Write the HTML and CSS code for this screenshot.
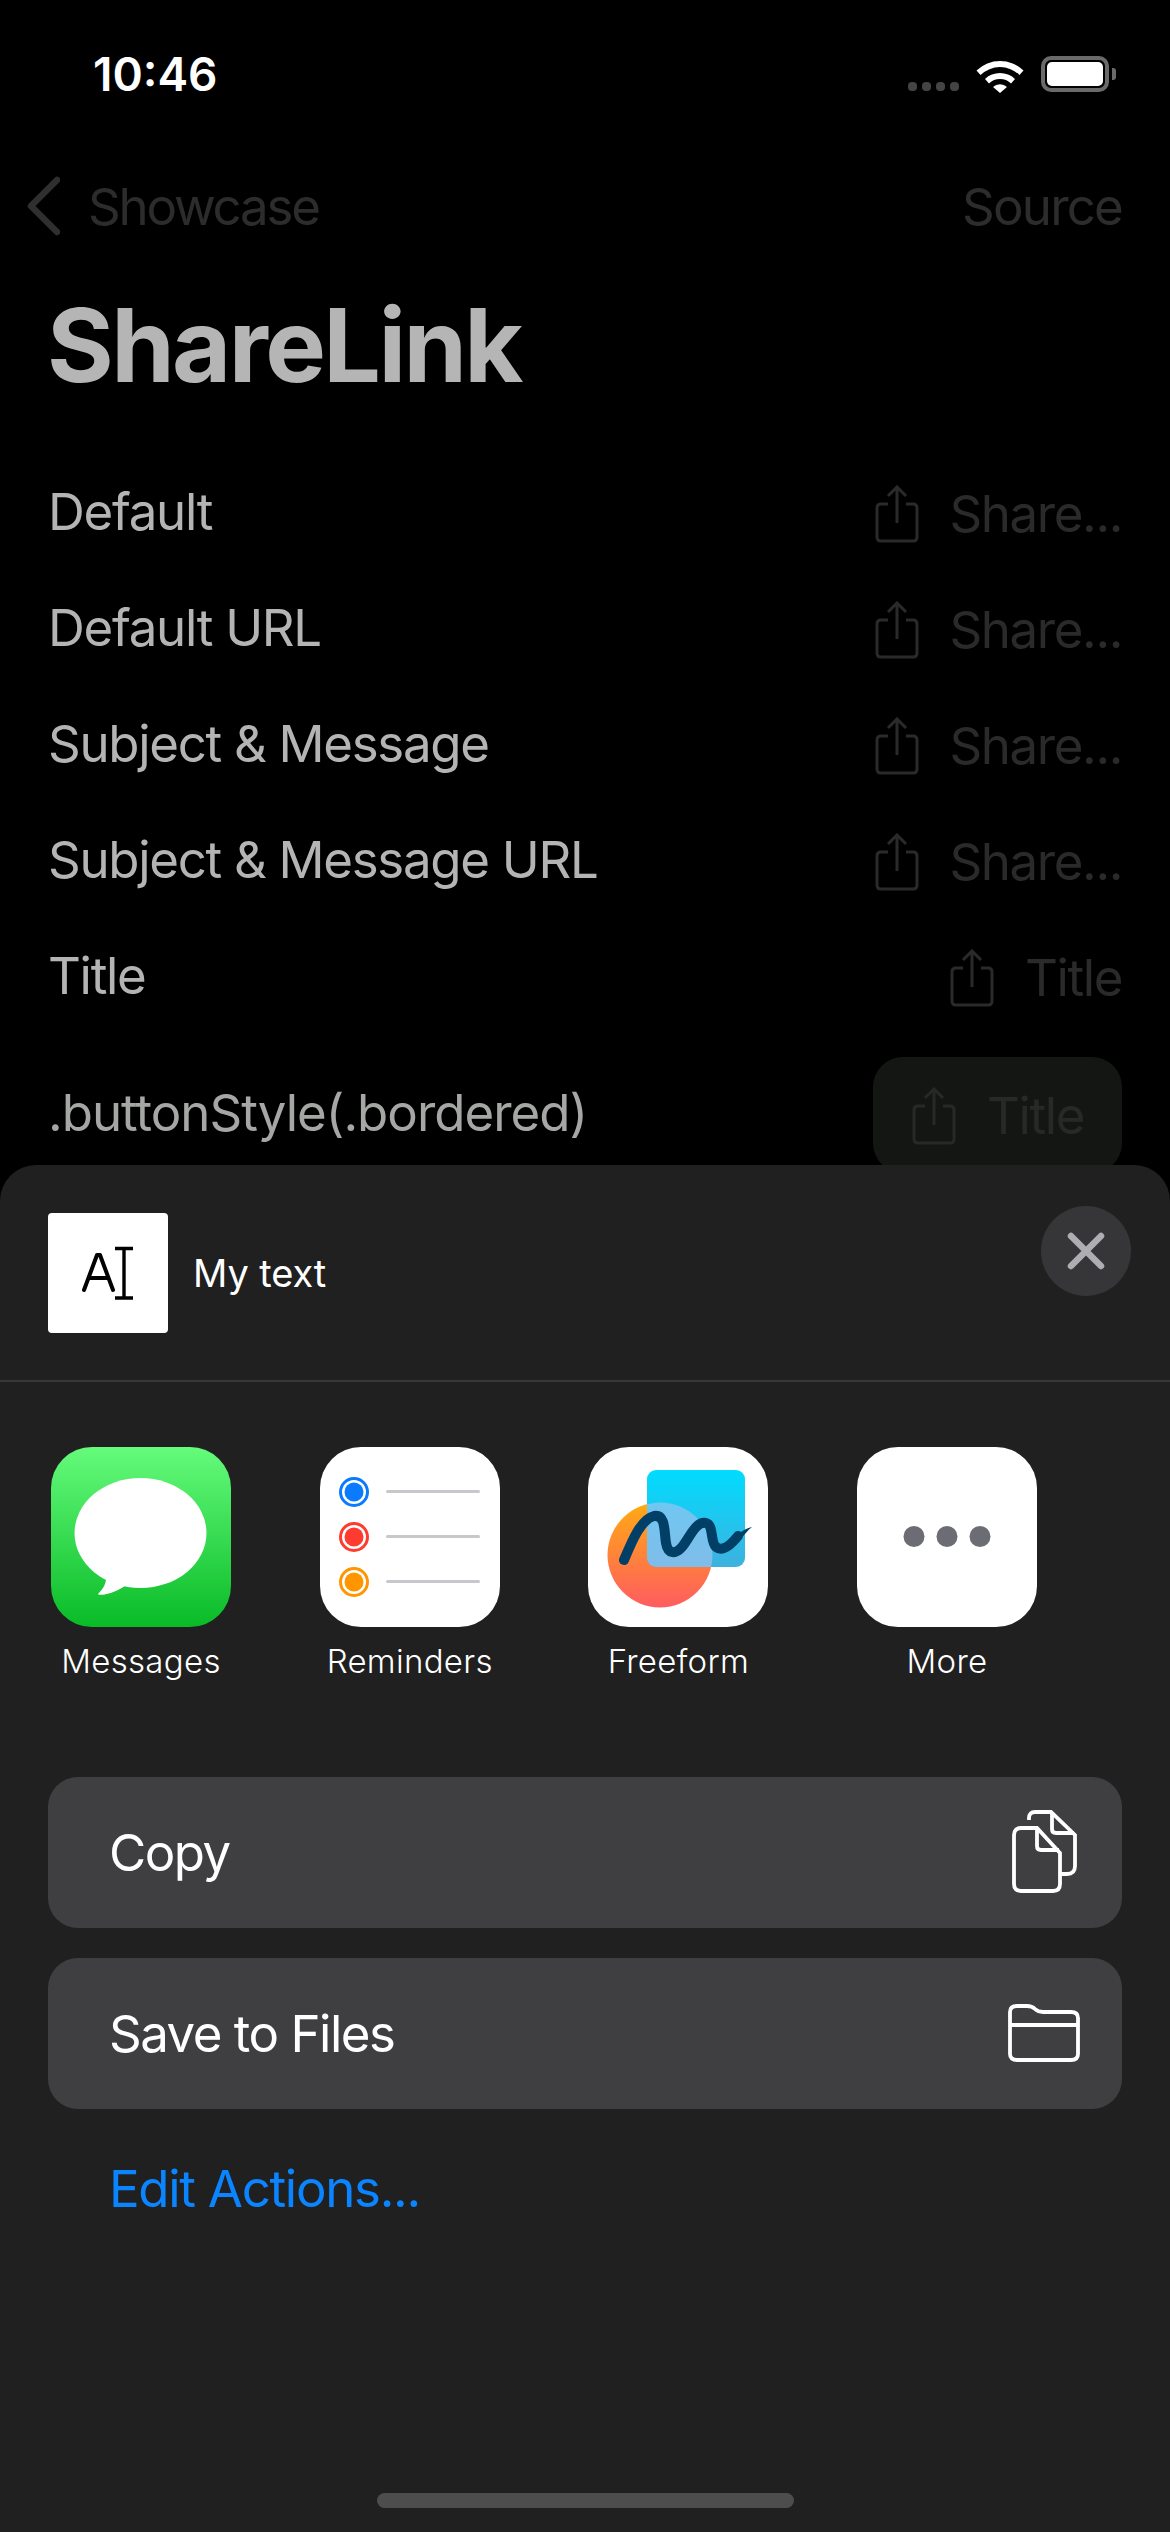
FILE: index.html
```html
<!DOCTYPE html>
<html>
<head>
    <title>ShareLink</title>
    <link rel="stylesheet" href="styles.css">
</head>
<body>
<div class="screen">
    <div class="status-bar">
        <span class="time">10:46</span>
        <div class="status-icons">
            <div class="signal"><i></i><i></i><i></i><i></i></div>
            <svg class="wifi" viewBox="0 0 48 37"><path d="M0.5 14.5 A34 34 0 0 1 47.5 14.5 L43.5 19 A28 28 0 0 0 4.5 19 Z M9 23 A22 22 0 0 1 39 23 L35 27.5 A16 16 0 0 0 13 27.5 Z M17 31 A10 10 0 0 1 31 31 L24 37 Z" fill="#fff"/></svg>
            <div class="battery"><div class="battery-fill"></div></div>
            <div class="battery-nub"></div>
        </div>
    </div>

    <div class="nav">
        <div class="nav-back">
            <svg class="chevron" viewBox="0 0 34 60"><path d="M31 4 L5 30 L31 56" fill="none" stroke="#2f2f2f" stroke-width="6.5" stroke-linecap="round" stroke-linejoin="round"/></svg>
            <span>Showcase</span>
        </div>
        <span>Source</span>
    </div>

    <h1 class="title">ShareLink</h1>

    <div class="list">
        <div class="row">
            <span>Default</span>
            <div class="share"><svg class="share-icon" viewBox="0 0 44 58"><path d="M13 19 H6 Q2 19 2 23 V52 Q2 56 6 56 H38 Q42 56 42 52 V23 Q42 19 38 19 H31 M22 38 V3 M13 11 L22 2 L31 11" fill="none" stroke="currentColor" stroke-width="3"/></svg><span>Share...</span></div>
        </div>
        <div class="row">
            <span>Default URL</span>
            <div class="share"><svg class="share-icon" viewBox="0 0 44 58"><path d="M13 19 H6 Q2 19 2 23 V52 Q2 56 6 56 H38 Q42 56 42 52 V23 Q42 19 38 19 H31 M22 38 V3 M13 11 L22 2 L31 11" fill="none" stroke="currentColor" stroke-width="3"/></svg><span>Share...</span></div>
        </div>
        <div class="row">
            <span>Subject &amp; Message</span>
            <div class="share"><svg class="share-icon" viewBox="0 0 44 58"><path d="M13 19 H6 Q2 19 2 23 V52 Q2 56 6 56 H38 Q42 56 42 52 V23 Q42 19 38 19 H31 M22 38 V3 M13 11 L22 2 L31 11" fill="none" stroke="currentColor" stroke-width="3"/></svg><span>Share...</span></div>
        </div>
        <div class="row">
            <span>Subject &amp; Message URL</span>
            <div class="share"><svg class="share-icon" viewBox="0 0 44 58"><path d="M13 19 H6 Q2 19 2 23 V52 Q2 56 6 56 H38 Q42 56 42 52 V23 Q42 19 38 19 H31 M22 38 V3 M13 11 L22 2 L31 11" fill="none" stroke="currentColor" stroke-width="3"/></svg><span>Share...</span></div>
        </div>
        <div class="row">
            <span>Title</span>
            <div class="share"><svg class="share-icon" viewBox="0 0 44 58"><path d="M13 19 H6 Q2 19 2 23 V52 Q2 56 6 56 H38 Q42 56 42 52 V23 Q42 19 38 19 H31 M22 38 V3 M13 11 L22 2 L31 11" fill="none" stroke="currentColor" stroke-width="3"/></svg><span>Title</span></div>
        </div>
        <div class="row row-bordered">
            <span>.buttonStyle(.bordered)</span>
            <div class="share share-bordered"><svg class="share-icon" viewBox="0 0 44 58"><path d="M13 19 H6 Q2 19 2 23 V52 Q2 56 6 56 H38 Q42 56 42 52 V23 Q42 19 38 19 H31 M22 38 V3 M13 11 L22 2 L31 11" fill="none" stroke="currentColor" stroke-width="3"/></svg><span>Title</span></div>
        </div>
    </div>

    <div class="sheet">
        <div class="sheet-header">
            <div class="preview">
                <div class="thumb">
                    <svg viewBox="0 0 120 120" width="120" height="120">
                        <path d="M36 77 L49 42 H52 L65 77 M41 65 H60" fill="none" stroke="#000" stroke-width="4" stroke-linecap="round" stroke-linejoin="round"/>
                        <path d="M67 35.5 H85 M67 85 H85 M76 35.5 V85" fill="none" stroke="#000" stroke-width="3.4"/>
                    </svg>
                </div>
                <span class="preview-text">My text</span>
            </div>
            <div class="close">
                <svg viewBox="0 0 38 38" width="38" height="38"><path d="M4 4 L34 34 M34 4 L4 34" stroke="#aeaeb2" stroke-width="6.5" stroke-linecap="round"/></svg>
            </div>
        </div>

        <div class="apps">
            <div class="app">
                <svg class="app-icon" viewBox="0 0 180 180">
                    <defs><linearGradient id="msg" x1="0" y1="0" x2="0" y2="1"><stop offset="0" stop-color="#65fb7b"/><stop offset="1" stop-color="#09bb27"/></linearGradient></defs>
                    <rect width="180" height="180" rx="41" fill="url(#msg)"/>
                    <ellipse cx="89.5" cy="86" rx="66" ry="55" fill="#fff"/>
                    <path d="M55 128 C56 136 52 142 47 147 C47 149 60 148 74 139 Z" fill="#fff"/>
                </svg>
                <span>Messages</span>
            </div>
            <div class="app">
                <svg class="app-icon" viewBox="0 0 180 180">
                    <rect width="180" height="180" rx="41" fill="#fff"/>
                    <circle cx="34" cy="45" r="13.5" fill="#fff" stroke="#0a7aff" stroke-width="3"/>
                    <circle cx="34" cy="45" r="9.5" fill="#0a7aff"/>
                    <circle cx="34" cy="90" r="13.5" fill="#fff" stroke="#ff3b30" stroke-width="3"/>
                    <circle cx="34" cy="90" r="9.5" fill="#ff3b30"/>
                    <circle cx="34" cy="135" r="13.5" fill="#fff" stroke="#ff9500" stroke-width="3"/>
                    <circle cx="34" cy="135" r="9.5" fill="#ff9500"/>
                    <path d="M67.5 44.5 H158.5 M67.5 89.5 H158.5 M67.5 134.5 H158.5" stroke="#c7c7cc" stroke-width="3" stroke-linecap="round"/>
                </svg>
                <span>Reminders</span>
            </div>
            <div class="app">
                <svg class="app-icon" viewBox="0 0 180 180">
                    <defs>
                        <linearGradient id="sun" x1="0" y1="0" x2="0" y2="1"><stop offset="0" stop-color="#ffab12"/><stop offset="1" stop-color="#ff5c60"/></linearGradient>
                        <linearGradient id="note" x1="0" y1="0" x2="0" y2="1"><stop offset="0" stop-color="#00dcff"/><stop offset="1" stop-color="#3eb1de"/></linearGradient>
                        <clipPath id="note-clip"><rect x="59" y="23" width="98" height="97" rx="9"/></clipPath>
                    </defs>
                    <rect width="180" height="180" rx="41" fill="#fff"/>
                    <circle cx="72" cy="108" r="52.5" fill="url(#sun)"/>
                    <rect x="59" y="23" width="98" height="97" rx="9" fill="url(#note)"/>
                    <circle cx="72" cy="108" r="52.5" fill="#a8c4f0" opacity="0.62" clip-path="url(#note-clip)"/>
                    <path d="M36 113 C44 94 53 72 66 69 C78 67 76 85 78 96 C80 108 88 107 94 100 C102 90 108 74 118 76 C126 78 122 95 128 100 C136 106 146 94 150 89" fill="none" stroke="#023f66" stroke-width="10" stroke-linecap="round"/>
                    <path d="M146 92 C152 84 159 81 164 80 C160 83 156 88 151 94 Z" fill="#023f66"/>
                </svg>
                <span>Freeform</span>
            </div>
            <div class="app">
                <svg class="app-icon" viewBox="0 0 180 180">
                    <rect width="180" height="180" rx="41" fill="#fff"/>
                    <circle cx="57" cy="89.5" r="10.5" fill="#6c6c74"/>
                    <circle cx="90" cy="89.5" r="10.5" fill="#6c6c74"/>
                    <circle cx="123" cy="89.5" r="10.5" fill="#6c6c74"/>
                </svg>
                <span>More</span>
            </div>
        </div>

        <div class="actions">
            <div class="action">
                <span>Copy</span>
                <svg class="action-icon" viewBox="0 0 72 90">
                    <path d="M21 12 V10 Q21 4 27 4 H43 L67 27 V58 Q67 66 59 66 H53" fill="none" stroke="#fff" stroke-width="3.8"/>
                    <path d="M44 5 V21 Q44 25 48 25 H66" fill="none" stroke="#fff" stroke-width="3.8"/>
                    <path d="M13 20 H29 L52 45 V76 Q52 83 45 83 H13 Q6 83 6 76 V27 Q6 20 13 20 Z" fill="#3f3f41" stroke="#fff" stroke-width="3.8"/>
                    <path d="M29 21 V38 Q29 42 33 42 H51" fill="none" stroke="#fff" stroke-width="3.8"/>
                </svg>
            </div>
            <div class="action">
                <span>Save to Files</span>
                <svg class="action-icon" viewBox="0 0 72 90">
                    <path d="M9 17 H19 Q24 17 27 20 Q30 23 35 23 H63 Q70 23 70 29 V65 Q70 71 63 71 H9 Q2 71 2 65 V23 Q2 17 9 17 Z M2 36 H70" fill="none" stroke="#fff" stroke-width="3.8"/>
                </svg>
            </div>
        </div>

        <a class="edit-actions">Edit Actions...</a>

        <div class="home-bar"></div>
    </div>
</div>
</body>
</html>
```

FILE: styles.css
```css
/* Share sheet over a dimmed SwiftUI list. */
body, html {
    margin: 0;
    padding: 0;
    background: #000;
    font-family: Inter, "Liberation Sans", sans-serif;
}
.screen {
    position: relative;
    width: 1170px;
    height: 2532px;
    overflow: hidden;
}

/* Status bar */
.status-bar {
    display: flex;
    justify-content: space-between;
    align-items: center;
    height: 56px;
    padding: 46px 54px 0 93px;
}
.time {
    color: #fff;
    font-size: 46px;
    font-weight: 600;
}
.status-icons {
    display: flex;
    align-items: center;
}
.signal {
    display: flex;
    gap: 5px;
    margin: 25px 17px 0 0;
}
.signal i {
    width: 9px;
    height: 9px;
    border-radius: 4px;
    background: #444;
}
.wifi {
    width: 48px;
    height: 37px;
    margin-right: 17px;
}
.battery {
    width: 68px;
    height: 36px;
    box-sizing: border-box;
    border: 4px solid #6a6a6a;
    border-radius: 10px;
    padding: 2px;
}
.battery-fill {
    height: 100%;
    background: #fff;
    border-radius: 5px;
}
.battery-nub {
    width: 4px;
    height: 12px;
    margin-left: 3px;
    background: #6a6a6a;
    border-radius: 0 3px 3px 0;
}

/* Nav bar */
.nav {
    display: flex;
    justify-content: space-between;
    align-items: center;
    height: 64px;
    margin-top: 72px;
    padding: 0 48px 0 26px;
    color: #2c2c2c;
    font-size: 51px;
    letter-spacing: -1.8px;
}
.nav-back {
    display: flex;
    align-items: center;
    gap: 28px;
    letter-spacing: -2.2px;
}
.chevron {
    width: 34px;
    height: 60px;
}

.title {
    margin: 45px 0 0;
    padding-left: 47px;
    color: #b5b5b5;
    font-size: 102px;
    font-weight: 700;
    line-height: 124px;
    letter-spacing: -2.6px;
}

/* List rows */
.list {
    margin-top: 46px;
}
.row {
    display: flex;
    justify-content: space-between;
    align-items: center;
    height: 116px;
    padding: 0 48px;
    color: #b4b4b4;
    font-size: 51px;
    letter-spacing: -1.3px;
}
.share {
    display: flex;
    align-items: center;
    gap: 31px;
    padding-top: 4px;
    color: #2a2a2a;
    letter-spacing: -1.4px;
}
.share-icon {
    width: 44px;
    height: 58px;
    margin-top: 2px;
}
.row-bordered {
    color: #a5a7a5;
    margin-top: 21px;
    letter-spacing: -1px;
}
.share-bordered {
    box-sizing: border-box;
    height: 116px;
    margin-top: 6px;
    padding: 0 38px 0 39px;
    border-radius: 30px;
    background: #141614;
    color: #272927;
}

/* Share sheet */
.sheet {
    position: absolute;
    top: 1165px;
    left: 0;
    right: 0;
    bottom: 0;
    display: flex;
    flex-direction: column;
    background: #202020;
    border-radius: 36px 36px 0 0;
}
.sheet-header {
    display: flex;
    justify-content: space-between;
    align-items: flex-start;
    box-sizing: border-box;
    height: 217px;
    padding: 41px 39px 0 48px;
    border-bottom: 2px solid #383838;
}
.preview {
    display: flex;
    align-items: center;
    gap: 25px;
    margin-top: 7px;
}
.thumb {
    width: 120px;
    height: 120px;
    background: #fff;
    border-radius: 4px;
}
.preview-text {
    color: #fff;
    font-size: 38px;
    letter-spacing: -0.1px;
}
.close {
    display: flex;
    align-items: center;
    justify-content: center;
    width: 90px;
    height: 90px;
    border-radius: 50%;
    background: #363639;
}

/* App icons */
.apps {
    display: flex;
    gap: 88.7px;
    padding: 65px 0 0 51px;
}
.app {
    display: flex;
    flex-direction: column;
    align-items: center;
    width: 180px;
    color: #fff;
    font-size: 33px;
    font-weight: 300;
    letter-spacing: 0.3px;
}
.app-icon {
    width: 180px;
    height: 180px;
    margin-bottom: 14px;
}

/* Action rows */
.actions {
    display: flex;
    flex-direction: column;
    gap: 30px;
    margin: 96px 48px 0;
}
.action {
    display: flex;
    justify-content: space-between;
    align-items: center;
    height: 151px;
    padding: 0 42px 0 61px;
    border-radius: 30px;
    background: #3f3f41;
    color: #fff;
    font-size: 51px;
    letter-spacing: -1.5px;
}
.action-icon {
    width: 72px;
    height: 90px;
}
.edit-actions {
    margin: 49px 0 0 109px;
    color: #0a84ff;
    font-size: 51px;
    letter-spacing: -1.3px;
}
.home-bar {
    width: 417px;
    height: 15px;
    margin: auto auto 24px;
    border-radius: 8px;
    background: #4d4d4d;
}
```
